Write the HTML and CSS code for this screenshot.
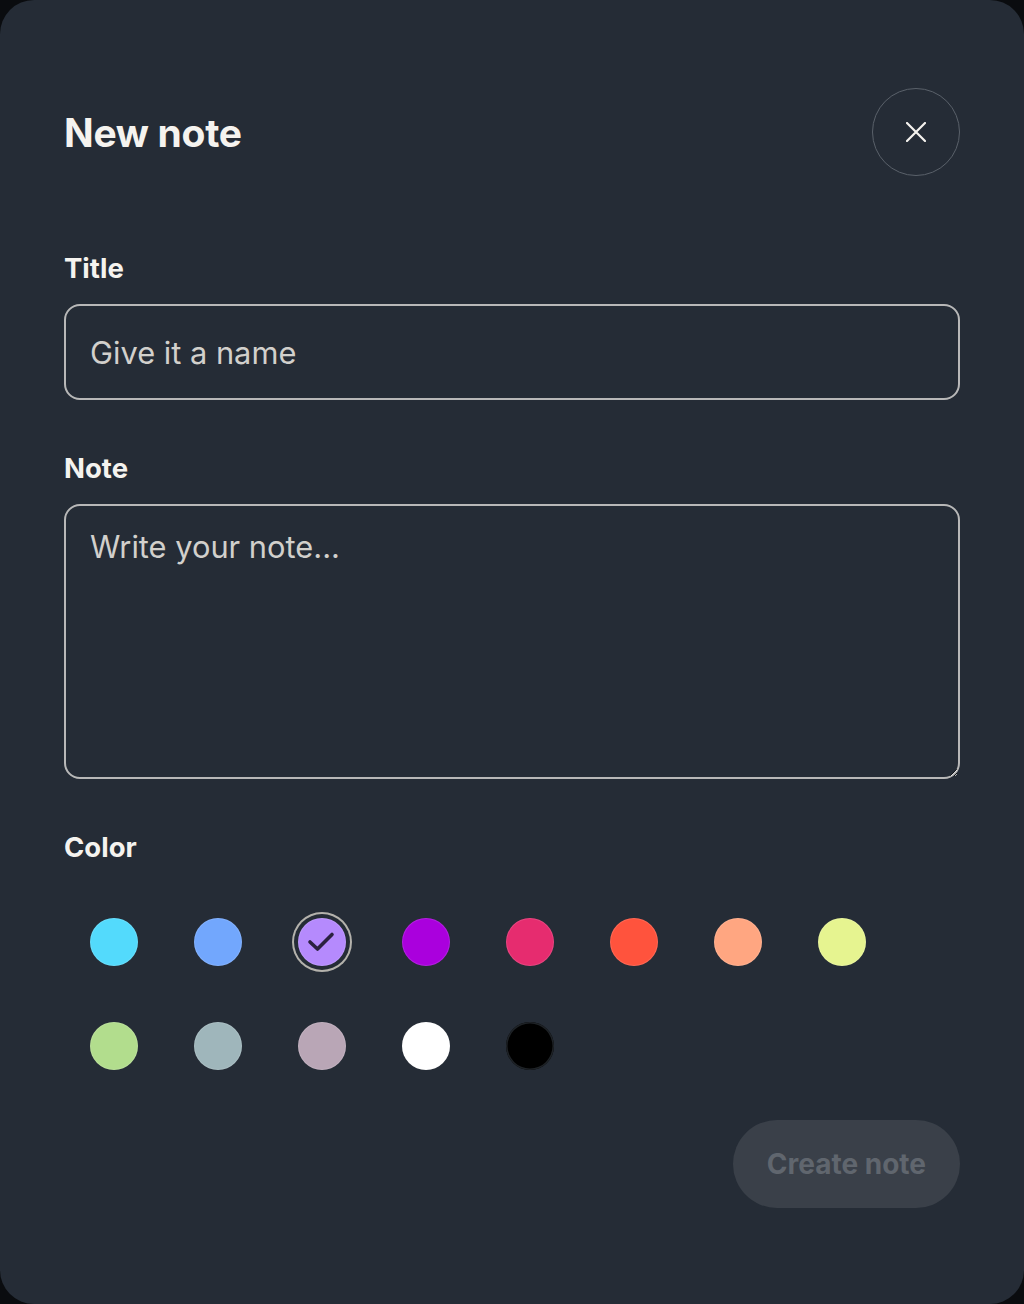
FILE: index.html
```html
<!DOCTYPE html>
<html lang="en">
<head>
    <meta charset="UTF-8">
    <meta name="viewport" content="width=device-width, initial-scale=1.0">
    <title>New note</title>
    <link rel="stylesheet" href="styles.css">
</head>
<body>
    <div class="modal">
        <div class="modal-header">
            <h1>New note</h1>
            <button type="button" class="close-btn" aria-label="Close">
                <svg width="20" height="20" viewBox="0 0 20 20">
                    <path d="M1 1 L19 19 M19 1 L1 19" stroke="#f5f3ef" stroke-width="2.2" stroke-linecap="round" fill="none"/>
                </svg>
            </button>
        </div>

        <form class="note-form">
            <div class="form-group">
                <label for="title">Title</label>
                <input type="text" id="title" name="title" placeholder="Give it a name">
            </div>

            <div class="form-group">
                <label for="note">Note</label>
                <textarea id="note" name="note" placeholder="Write your note..."></textarea>
            </div>

            <div class="form-group">
                <label>Color</label>
                <div class="swatches">
                    <span class="swatch" style="background-color: #53dafc;"></span>
                    <span class="swatch" style="background-color: #72a7fd;"></span>
                    <span class="swatch selected" style="background-color: #b58afd;">
                        <svg width="48" height="48" viewBox="0 0 48 48">
                            <polyline points="12,24 19.5,31 34,16.5" stroke="#2b2140" stroke-width="3.6" stroke-linecap="round" stroke-linejoin="round" fill="none"/>
                        </svg>
                    </span>
                    <span class="swatch" style="background-color: #aa00dd;"></span>
                    <span class="swatch" style="background-color: #e62c6f;"></span>
                    <span class="swatch" style="background-color: #ff533d;"></span>
                    <span class="swatch" style="background-color: #ffa681;"></span>
                    <span class="swatch" style="background-color: #e6f490;"></span>
                    <span class="swatch" style="background-color: #b2dd8d;"></span>
                    <span class="swatch" style="background-color: #9fb6bb;"></span>
                    <span class="swatch" style="background-color: #b9a6b6;"></span>
                    <span class="swatch" style="background-color: #ffffff;"></span>
                    <span class="swatch dark" style="background-color: #000000;"></span>
                </div>
            </div>

            <div class="actions">
                <button type="submit" class="create-btn" disabled>Create note</button>
            </div>
        </form>
    </div>
</body>
</html>
```

FILE: styles.css
```css
* {
    box-sizing: border-box;
}
html, body {
    margin: 0;
    height: 100%;
}
body {
    background-color: #0a0c0f;
    font-family: Inter, "Noto Sans", sans-serif;
    color: #f5f3ef;
}
.modal {
    width: 1024px;
    height: 1304px;
    background-color: #252c36;
    border-radius: 34px;
    padding: 88px 64px 0 64px;
}
.modal-header {
    display: flex;
    align-items: center;
    justify-content: space-between;
    height: 88px;
}
h1 {
    margin: 0;
    font-size: 39px;
    font-weight: 700;
    letter-spacing: -0.3px;
}
.close-btn {
    width: 88px;
    height: 88px;
    border-radius: 50%;
    border: 1.5px solid #5a616a;
    background: transparent;
    display: flex;
    align-items: center;
    justify-content: center;
    padding: 0;
    cursor: pointer;
}
.note-form {
    margin-top: 76px;
}
.form-group {
    margin-bottom: 52px;
}
label {
    display: block;
    font-size: 27.5px;
    line-height: 33px;
    font-weight: 700;
    margin-bottom: 19px;
}
input[type="text"],
textarea {
    display: block;
    width: 100%;
    background: transparent;
    border: 2px solid #b8b8b8;
    border-radius: 16px;
    color: #f5f3ef;
    font-family: Inter, "Noto Sans", sans-serif;
    font-size: 30.8px;
    padding: 0 24px;
    outline: none;
}
input[type="text"] {
    height: 96px;
}
textarea {
    height: 275px;
    padding-top: 22px;
    resize: vertical;
}
input::placeholder,
textarea::placeholder {
    color: #d2d0cc;
    opacity: 1;
}
.swatches {
    display: flex;
    flex-wrap: wrap;
    column-gap: 56px;
    row-gap: 56px;
    padding: 35px 26px 0 26px;
    width: 832px;
}
.swatch {
    width: 48px;
    height: 48px;
    border-radius: 50%;
    box-shadow: inset 0 0 0 1px rgba(255, 255, 255, 0.12);
    display: flex;
}
.swatch.selected {
    box-shadow: inset 0 0 0 1px rgba(255, 255, 255, 0.12), 0 0 0 4px #252c36, 0 0 0 6px #b4b2ac;
}
.swatch.dark {
    box-shadow: inset 0 0 0 1.5px #1e2226;
}
.actions {
    display: flex;
    justify-content: flex-end;
    margin-top: -2px;
}
.create-btn {
    height: 88px;
    padding: 0 34px;
    border: none;
    border-radius: 44px;
    background-color: #3a4049;
    color: #60666e;
    font-family: Inter, "Noto Sans", sans-serif;
    font-size: 28px;
    font-weight: 700;
}
```
